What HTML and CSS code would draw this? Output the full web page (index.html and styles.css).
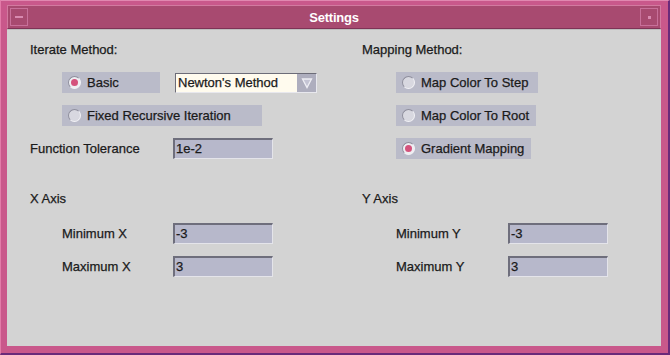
FILE: index.html
```html
<!DOCTYPE html>
<html lang="en">
<head>
  <meta charset="UTF-8">
  <title>Settings</title>
  <link rel="stylesheet" href="styles.css">
</head>
<body>
<div class="window">
  <div class="titlebar">
    <div class="tb-button"><span class="dash"></span></div>
    <div class="title">Settings</div>
    <div class="tb-button"><span class="dot"></span></div>
  </div>

  <div class="content">
    <div class="section top">
      <div class="column">
        <div class="heading">Iterate Method:</div>
        <div class="row indent">
          <div class="radio w-basic"><span class="knob on"></span>Basic</div>
          <div class="combo">
            <span class="combo-text">Newton's Method</span>
            <span class="combo-arrow">
              <svg width="12" height="12" viewBox="0 0 12 12"><path d="M1.5 2 L10.5 2 L6 10.5 Z" fill="#c4c4d4" stroke="#eeeef4" stroke-width="1.3"/></svg>
            </span>
          </div>
        </div>
        <div class="row indent">
          <div class="radio w-fixed"><span class="knob"></span>Fixed Recursive Iteration</div>
        </div>
        <div class="row">
          <span class="label wide">Function Tolerance</span>
          <div class="field">1e-2</div>
        </div>
      </div>

      <div class="column">
        <div class="heading">Mapping Method:</div>
        <div class="row indent2">
          <div class="radio w-step"><span class="knob"></span>Map Color To Step</div>
        </div>
        <div class="row indent2">
          <div class="radio w-root"><span class="knob"></span>Map Color To Root</div>
        </div>
        <div class="row indent2">
          <div class="radio w-grad"><span class="knob on"></span>Gradient Mapping</div>
        </div>
      </div>
    </div>

    <div class="section bottom">
      <div class="column">
        <div class="heading">X Axis</div>
        <div class="row indent">
          <span class="label">Minimum X</span>
          <div class="field">-3</div>
        </div>
        <div class="row indent">
          <span class="label">Maximum X</span>
          <div class="field">3</div>
        </div>
      </div>
      <div class="column">
        <div class="heading">Y Axis</div>
        <div class="row indent2">
          <span class="label">Minimum Y</span>
          <div class="field">-3</div>
        </div>
        <div class="row indent2">
          <span class="label">Maximum Y</span>
          <div class="field">3</div>
        </div>
      </div>
    </div>
  </div>
</div>
</body>
</html>
```

FILE: styles.css
```css
html, body {
  margin: 0;
  padding: 0;
  background: #c85a8c;
}
body {
  width: 670px;
  height: 355px;
  overflow: hidden;
  font-family: "Liberation Sans", Arial, sans-serif;
  font-size: 13px;
  color: #1a1a1a;
  -webkit-text-stroke: 0.25px #1a1a1a;
}
.window {
  box-sizing: border-box;
  width: 670px;
  height: 355px;
  padding: 4px 7px 7px 6px;
  background: #c9588b;
  border-top: 1px solid #e088b0;
  border-left: 1px solid #e27ba8;
  border-right: 2px solid #6a2a7a;
  border-bottom: 2px solid #6a2a7a;
  display: flex;
  flex-direction: column;
}

/* title bar */
.titlebar {
  height: 22px;
  display: flex;
  align-items: center;
  background: #a84a70;
  border: 1px solid #d27aa0;
  border-bottom-color: #7e3356;
}
.tb-button {
  width: 18px;
  height: 18px;
  margin: 0 2px;
  box-sizing: border-box;
  border: 1px solid #c8709a;
  display: flex;
  align-items: center;
  justify-content: center;
}
.dash {
  width: 8px;
  height: 2px;
  background: #d88ab0;
}
.dot {
  width: 3px;
  height: 3px;
  background: #d88ab0;
}
.title {
  flex: 1;
  text-align: center;
  color: #fff;
  -webkit-text-stroke: 0;
  font-weight: bold;
  font-size: 13px;
  letter-spacing: -0.2px;
}

/* dialog content */
.content {
  flex: 1;
  background: #d3d3d3;
  padding: 12px 0 0 23px;
  border-top: 1px solid #bdbdbd;
}
.section {
  display: grid;
  grid-template-columns: 332px 1fr;
}
.section.bottom {
  margin-top: 20px;
}
.heading {
  height: 16px;
  line-height: 16px;
}
.top .heading {
  margin-bottom: 14px;
}
.bottom .heading {
  margin-bottom: 16px;
}
.row {
  display: flex;
  align-items: center;
  height: 21px;
  margin-bottom: 12px;
}
.indent {
  padding-left: 32px;
}
.indent2 {
  padding-left: 34px;
}

/* radio buttons */
.radio {
  box-sizing: border-box;
  height: 21px;
  display: flex;
  align-items: center;
  background: #babbc9;
  padding-left: 6px;
}
.w-basic { width: 98px; margin-right: 15px; }
.w-fixed { width: 200px; }
.w-step { width: 142px; }
.w-root { width: 140px; }
.w-grad { width: 135px; }
.knob {
  box-sizing: border-box;
  width: 13px;
  height: 13px;
  border-radius: 50%;
  margin-right: 6px;
  background: #d8d8e0;
  border: 1px solid #8e8e9c;
  border-right-color: #f2f2f6;
  border-bottom-color: #f2f2f6;
  position: relative;
}
.knob.on {
  background: #eeeef2;
}
.knob.on::after {
  content: "";
  position: absolute;
  left: 2px;
  top: 2px;
  width: 7px;
  height: 7px;
  border-radius: 50%;
  background: #d4527c;
}

/* combo box */
.combo {
  box-sizing: border-box;
  width: 142px;
  height: 20px;
  display: flex;
  border: 1px solid #6c6c78;
  border-right-color: #e8e8ee;
  border-bottom-color: #e8e8ee;
}
.combo-text {
  flex: 1;
  background: #fffbee;
  padding-left: 2px;
  line-height: 18px;
}
.combo-arrow {
  width: 19px;
  background: #aeaebe;
  display: flex;
  align-items: center;
  justify-content: center;
}

/* text fields */
.label {
  width: 111px;
}
.label.wide {
  width: 143px;
}
.indent2 .label {
  width: 112px;
}
.field {
  box-sizing: border-box;
  width: 100px;
  height: 21px;
  line-height: 18px;
  padding-left: 1px;
  background: #b7b8cb;
  border: 1px solid #e4e4ea;
  border-top: 2px solid #6e6e7c;
  border-left: 2px solid #6e6e7c;
}
```
